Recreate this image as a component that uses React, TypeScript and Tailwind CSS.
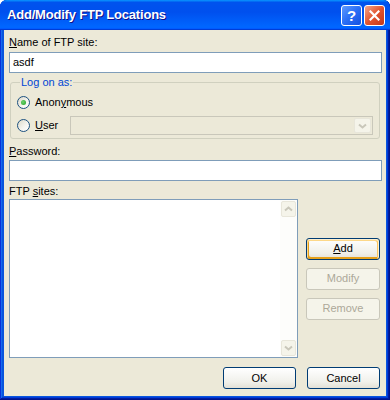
import React from 'react';

const Radio = ({ checked }: { checked?: boolean }) => (
  <span className="w-[13px] h-[13px] shrink-0 rounded-full border border-[#1c5180] bg-[linear-gradient(135deg,#dcd9c9,#f7f6f1_60%,#ffffff)] flex items-center justify-center">
    {checked && <span className="w-[5px] h-[5px] rounded-full bg-[radial-gradient(circle_at_40%_40%,#6fd36f,#21a121)]" />}
  </span>
);

const Chevron = ({ up }: { up?: boolean }) => (
  <svg width="9" height="6" viewBox="0 0 9 6" className={up ? 'rotate-180' : ''}>
    <path d="M1 1.5 L4.5 4.5 L8 1.5" fill="none" stroke="#c9c7ba" strokeWidth="2" />
  </svg>
);

const Button = ({
  children,
  disabled,
  hot,
  w = 'w-[73px]',
}: {
  children: React.ReactNode;
  disabled?: boolean;
  hot?: boolean;
  w?: string;
}) => {
  if (disabled) {
    return (
      <button className={`${w} h-[22px] rounded-[3px] border border-[#c9c7ba] bg-[#f5f4ea] text-[#aca899] text-[11px]`}>
        {children}
      </button>
    );
  }
  return (
    <button
      className={`${w} h-[22px] rounded-[3px] border border-[#003c74] bg-[linear-gradient(to_bottom,#ffffff,#f0f0ea_70%,#e3e0d6)] text-black text-[11px] ${
        hot ? 'shadow-[inset_-1px_1px_#fff0cf,inset_1px_2px_#fdd889,inset_-2px_2px_#fbc761,inset_2px_-2px_#e5a01a]' : ''
      }`}
    >
      {children}
    </button>
  );
};

export default function App() {
  return (
    <div className="w-[390px] h-[400px] bg-white font-['Liberation_Sans',Arial,sans-serif]">
      <div className="h-full flex flex-col rounded-t-[7px] overflow-hidden bg-[#0855dd] shadow-[inset_-1px_-1px_#00138c,inset_1px_1px_#0831d9,inset_-2px_-2px_#001ea0,inset_2px_2px_#166aee,inset_-3px_-3px_#003bda,inset_3px_3px_#0855dd]">
        {/* title bar */}
        <div className="h-[30px] shrink-0 flex items-center pl-[7px] pr-[5px] bg-[linear-gradient(180deg,#0997ff,#0053ee_8%,#0050ee_40%,#0066ff_88%,#0066ff_93%,#005bff_95%,#003dd7_96%,#003dd7)]">
          <span className="flex-1 text-white font-bold text-[13px] tracking-[-0.2px] [text-shadow:1px_1px_#0f1089]">
            Add/Modify FTP Locations
          </span>
          <div className="flex gap-[2px]">
            <div className="w-[21px] h-[21px] rounded-[3px] border border-white bg-[linear-gradient(135deg,#5f9bff,#2a6ef5_50%,#1450e0)] flex items-center justify-center text-white font-bold text-[15px] leading-none">
              ?
            </div>
            <div className="w-[21px] h-[21px] rounded-[3px] border border-white bg-[linear-gradient(135deg,#f3a58a,#e2542f_50%,#c3371a)] flex items-center justify-center">
              <svg width="11" height="11" viewBox="0 0 11 11">
                <path d="M1.5 1.5 L9.5 9.5 M9.5 1.5 L1.5 9.5" stroke="white" strokeWidth="2.2" strokeLinecap="square" />
              </svg>
            </div>
          </div>
        </div>

        {/* client area */}
        <div className="flex-1 mx-[4px] mb-[4px] bg-[#ece9d8] text-[11px] leading-[13px] text-black pl-[5px] pr-[4px] pt-[6px] flex flex-col">
          <div>
            <span className="underline">N</span>ame of FTP site:
          </div>
          <div className="mt-[3px] h-[21px] border border-[#7f9db9] bg-white flex items-center px-[3px] text-[11px]">
            asdf
          </div>

          <fieldset className="mt-[3px] ml-[1px] mr-[2px] border border-[#d0d0bf] rounded-[3px] pl-[6px] pr-[6px] pb-[3px]">
            <legend className="ml-[3px] px-[1px] text-[#0046d5]">Log on as:</legend>
            <div className="mt-[7px] flex items-center gap-[5px]">
              <Radio checked />
              <span>
                Anon<span className="underline">y</span>mous
              </span>
            </div>
            <div className="mt-[7px] flex items-center">
              <Radio />
              <span className="ml-[5px] w-[34px]">
                <span className="underline">U</span>ser
              </span>
              <div className="ml-auto w-[303px] h-[19px] border border-[#c9c7ba] bg-[#ece9d8] flex justify-end p-[1px]">
                <div className="w-[17px] h-full rounded-[2px] border border-[#e8e6da] bg-[#f5f4ea] flex items-center justify-center">
                  <Chevron />
                </div>
              </div>
            </div>
          </fieldset>

          <div className="mt-[6px]">
            <span className="underline">P</span>assword:
          </div>
          <div className="mt-[2px] h-[21px] border border-[#7f9db9] bg-white" />

          <div className="mt-[4px]">
            FTP <span className="underline">s</span>ites:
          </div>
          <div className="mt-[1px] flex items-center">
            <div className="w-[289px] h-[159px] border border-[#7f9db9] bg-white flex justify-end">
              <div className="w-[17px] h-full bg-[#fdfdfb] flex flex-col justify-between p-[1px]">
                <div className="h-[16px] rounded-[2px] border border-[#e8e6da] bg-[#f5f4ea] flex items-center justify-center">
                  <Chevron up />
                </div>
                <div className="h-[16px] rounded-[2px] border border-[#e8e6da] bg-[#f5f4ea] flex items-center justify-center">
                  <Chevron />
                </div>
              </div>
            </div>
            <div className="ml-[8px] flex flex-col gap-[8px]">
              <Button hot w="w-[74px]">
                <span className="underline">A</span>dd
              </Button>
              <Button disabled w="w-[74px]">
                Modify
              </Button>
              <Button disabled w="w-[74px]">
                Remove
              </Button>
            </div>
          </div>

          <div className="mt-[9px] flex justify-end gap-[11px] pr-[2px]">
            <Button>OK</Button>
            <Button>Cancel</Button>
          </div>
        </div>
      </div>
    </div>
  );
}
